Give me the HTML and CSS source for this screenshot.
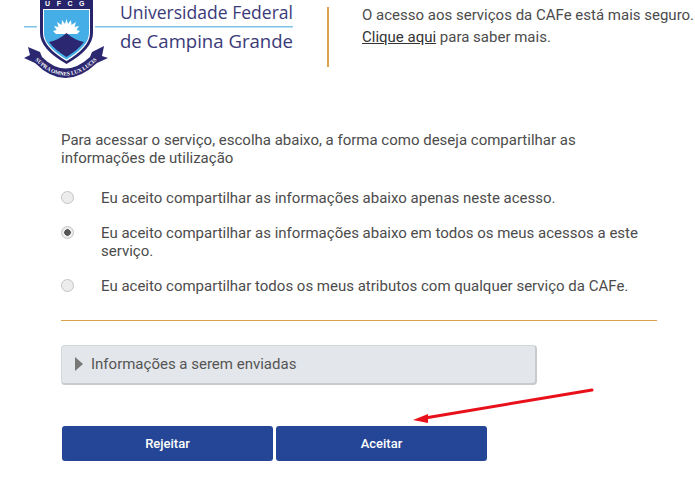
FILE: index.html
```html
<!DOCTYPE html>
<html lang="en">
<head>
    <meta charset="UTF-8">
    <title>CAFe</title>
    <link rel="stylesheet" href="styles.css">
</head>
<body>

<div class="header">
    <svg class="logo" width="275" height="80" viewBox="0 0 275 80">
        <rect x="0" y="26" width="13" height="1.500" fill="#7cc4e8"/>
        <rect x="71" y="26" width="198" height="1.500" fill="#7cc4e8"/>
        <path d="M16 0H69V33Q69 49 42.500 64Q16 49 16 33Z" fill="#27246b"/>
        <path d="M19 9H66V33Q66 47 42.500 61Q19 47 19 33Z" fill="#fff"/>
        <path d="M20 10H65V33Q65 46 42.500 59.500Q20 46 20 33Z" fill="#45aee6"/>
        <path d="M42.500 19L44 24L47 20L47.500 25L52 22L50.500 27L55 26L52.500 30L56 31L53 34H32L29 31L32.500 30L30 26L34.500 27L33 22L37.500 25L38 20L41 24Z" fill="#fff"/>
        <path d="M25 42Q35 40 42.500 33Q50 40 60 42Q54 50 42.500 57Q31 50 25 42Z" fill="#2b2770"/>
        <path d="M4 47L16 52L18 57Q41 80 66 57L68 52L80 46L78 56L84 58L73 63Q41 93 11 63L0 58L6 55Z" fill="#2b2770"/>
        <path id="motto-line" d="M11 60Q41 91 73 60" fill="none"/>
        <text class="logo-motto" text-anchor="middle"><textPath href="#motto-line" startOffset="50%">SUPRA OMNES LUX LUCIS</textPath></text>
        <text class="logo-ufcg" x="44" y="6" text-anchor="middle">UFCG</text>
        <text class="logo-name" x="96" y="19" textLength="173" lengthAdjust="spacingAndGlyphs">Universidade Federal</text>
        <text class="logo-name" x="96" y="48" textLength="173" lengthAdjust="spacingAndGlyphs">de Campina Grande</text>
    </svg>
    <div class="header-line"></div>
    <div class="header-text">
        O acesso aos serviços da CAFe está mais seguro.<br>
        <a href="#">Clique aqui</a> para saber mais.
    </div>
</div>

<div class="content">
    <p class="intro">Para acessar o serviço, escolha abaixo, a forma como deseja compartilhar as informações de utilização</p>

    <label class="option">
        <input type="radio" name="consent">
        <span>Eu aceito compartilhar as informações abaixo apenas neste acesso.</span>
    </label>
    <label class="option">
        <input type="radio" name="consent" checked>
        <span>Eu aceito compartilhar as informações abaixo em todos os meus acessos a este serviço.</span>
    </label>
    <label class="option">
        <input type="radio" name="consent">
        <span>Eu aceito compartilhar todos os meus atributos com qualquer serviço da CAFe.</span>
    </label>

    <hr class="divider">

    <div class="details"><span class="arrow-right"></span>Informações a serem enviadas</div>

    <div class="buttons">
        <button>Rejeitar</button>
        <button>Aceitar</button>
    </div>
</div>

<svg class="annotation" width="190" height="40" viewBox="0 0 190 40">
    <path d="M181 3L14 31" stroke="#e8101a" stroke-width="3" stroke-linecap="round"/>
    <path d="M2 33L17 27L17 36Z" fill="#e8101a"/>
</svg>

</body>
</html>
```

FILE: styles.css
```css
body {
    font-family: Roboto, sans-serif;
    margin: 0;
    height: 492px;
    overflow: hidden;
    position: relative;
    background: #fff;
    color: #4c4c4c;
    font-size: 15px;
}
.header {
    display: flex;
    height: 80px;
    padding-left: 24px;
}
.logo {
    flex: none;
}
.logo-name {
    font-family: "Open Sans", sans-serif;
    font-size: 18px;
    fill: #3a3a78;
}
.logo-motto {
    font-family: "Liberation Serif", serif;
    font-size: 5.500px;
    font-weight: bold;
    fill: #fff;
}
.logo-ufcg {
    font-family: "Liberation Sans", sans-serif;
    font-size: 7px;
    font-weight: bold;
    letter-spacing: 6.500px;
    fill: #fff;
}
.header-line {
    width: 2px;
    height: 60px;
    margin: 7px 0 0 28px;
    background: #dca24a;
}
.header-text {
    margin: 4px 0 0 33px;
    line-height: 22px;
    white-space: nowrap;
}
.header-text a {
    color: #333;
}
.content {
    width: 596px;
    margin-left: 61px;
}
.intro {
    margin: 51px 0 22px;
    line-height: 18px;
}
.option {
    display: flex;
    align-items: flex-start;
    margin-bottom: 17px;
    line-height: 18px;
}
.option input {
    appearance: none;
    flex: none;
    width: 13px;
    height: 13px;
    margin: 2px 27px 0 0;
    border: 1px solid #c4c4c4;
    border-radius: 50%;
    background: #ececec;
}
.option input:checked {
    background: radial-gradient(circle, #555 0, #555 3px, #ececec 3.500px);
}
.divider {
    border: none;
    border-top: 1px solid #dca24a;
    margin: 25px 0 24px;
}
.details {
    width: 476px;
    height: 40px;
    box-sizing: border-box;
    display: flex;
    align-items: center;
    padding: 0 0 1px 13px;
    background: #e3e6ea;
    border: 1px solid #d5d8db;
    border-right: 2px solid #c8cacc;
    border-bottom: 2px solid #c8cacc;
    border-radius: 4px;
    font-size: 15px;
    color: #555;
}
.arrow-right {
    width: 0;
    height: 0;
    margin-right: 8px;
    border-left: 8px solid #777;
    border-top: 7px solid transparent;
    border-bottom: 7px solid transparent;
}
.buttons {
    display: flex;
    gap: 3px;
    margin: 41px 0 0 1px;
}
button {
    width: 211px;
    height: 35px;
    padding: 0;
    border: none;
    border-radius: 3px;
    background-color: #254596;
    color: #fff;
    font-family: Roboto, sans-serif;
    font-size: 13px;
    font-weight: 500;
}
.annotation {
    position: absolute;
    left: 411px;
    top: 387px;
}
```
